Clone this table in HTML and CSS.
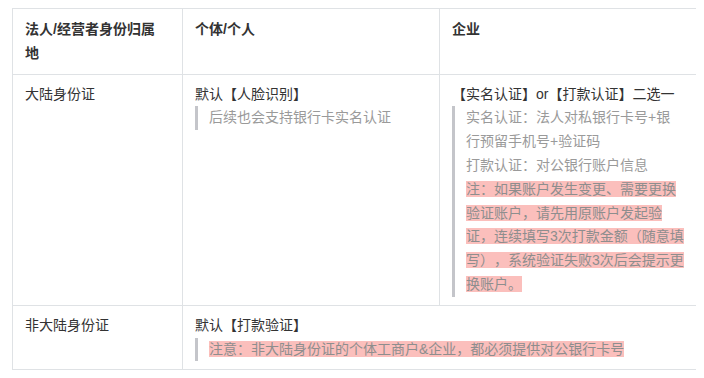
FILE: index.html
```html
<!DOCTYPE html>
<html lang="zh-CN">
<head>
<meta charset="utf-8">
<title>身份认证方式</title>
<link rel="stylesheet" href="styles.css">
</head>
<body>
<div class="doc">
  <table class="auth-table">
    <colgroup>
      <col class="col-region">
      <col class="col-person">
      <col class="col-company">
    </colgroup>
    <thead>
      <tr>
        <th>法人/经营者身份归属地</th>
        <th>个体/个人</th>
        <th>企业</th>
      </tr>
    </thead>
    <tbody>
      <tr>
        <td>大陆身份证</td>
        <td>
          <p>默认【人脸识别】</p>
          <blockquote class="quote">后续也会支持银行卡实名认证</blockquote>
        </td>
        <td>
          <p>【实名认证】or【打款认证】二选一</p>
          <blockquote class="quote">
            <p>实名认证：法人对私银行卡号+银行预留手机号+验证码</p>
            <p>打款认证：对公银行账户信息</p>
            <p><span class="mark">注：如果账户发生变更、需要更换验证账户，请先用原账户发起验证，连续填写3次打款金额（随意填写），系统验证失败3次后会提示更换账户。</span></p>
          </blockquote>
        </td>
      </tr>
      <tr>
        <td>非大陆身份证</td>
        <td colspan="2">
          <p>默认【打款验证】</p>
          <blockquote class="quote"><span class="mark">注意：非大陆身份证的个体工商户&amp;企业，都必须提供对公银行卡号</span></blockquote>
        </td>
      </tr>
    </tbody>
  </table>
</div>
</body>
</html>
```

FILE: styles.css
```css
html, body {
  margin: 0;
  padding: 0;
  background: #fff;
}

body {
  font-family: "Liberation Sans", "Noto Sans CJK SC", sans-serif;
  font-size: 14px;
  line-height: 1.7;
  color: #333;
  text-spacing-trim: space-all;
}

/* viewport-sized document area; the table runs on below the fold */
.doc {
  margin: 8px 0 0 12px;
  width: 684px;
  height: 362px;
  overflow: hidden;
}

.auth-table {
  width: 684px;
  table-layout: fixed;
  border-collapse: collapse;
}

.col-region { width: 170px; }
.col-person { width: 257px; }
.col-company { width: 257px; }

.auth-table th,
.auth-table td {
  border: 1px solid #dfe2e5;
  padding: 8px 12px;
  text-align: left;
  vertical-align: top;
}

.auth-table th {
  padding: 9px 16px 8px 12px;
  font-weight: bold;
  color: #333;
}

.auth-table p {
  margin: 0;
}

.quote {
  margin: 0;
  padding: 0 0 0 11px;
  border-left: 3px solid #c4c5ca;
  color: #9a9a9a;
}

.mark {
  background: #fbbfbc;
  color: #8e8e8e;
}
```
